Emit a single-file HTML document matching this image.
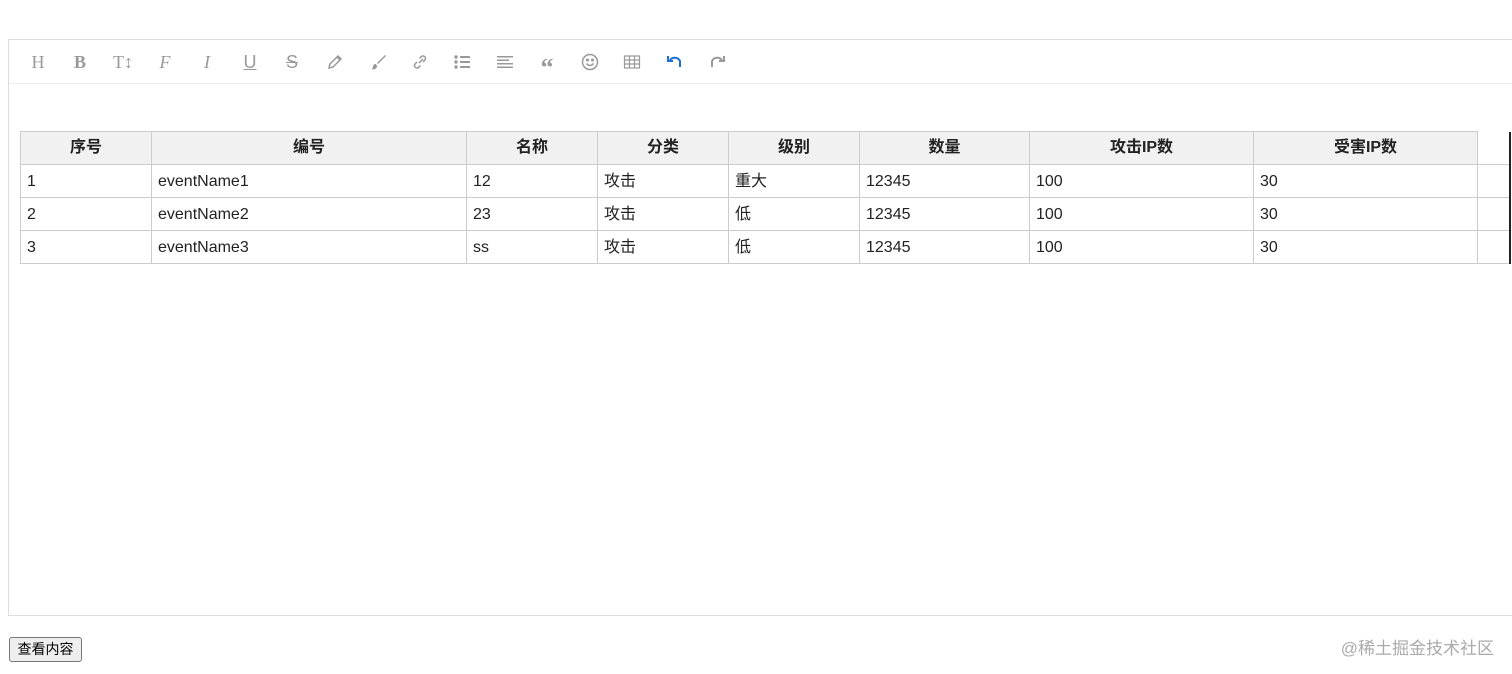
<!DOCTYPE html>
<html><head><meta charset="utf-8"><style>
body{margin:0;background:#fff;font-family:"Liberation Sans","Noto Sans CJK SC",sans-serif;width:1512px;height:674px;overflow:hidden;position:relative}
.ed{position:absolute;left:8px;top:39px;width:1510px;height:575px;border:1px solid #ddd;border-right:none}
.tb{height:43px;border-bottom:1px solid #eee;position:relative}
.ic{position:absolute;top:11px;width:22px;height:22px;text-align:center;line-height:22px;color:#999;font-size:18px}
.ic svg{display:block;margin:2px auto}
table{position:absolute;left:11px;top:91px;border-collapse:collapse;font-size:16px;color:#222}
td,th{border:1px solid #ccc;height:32px;padding:0 6px;text-align:left;line-height:32px;vertical-align:middle}
td span{display:inline-block;vertical-align:middle;line-height:20px;margin-top:2px}
th{background:#f1f1f1;text-align:center;font-weight:bold;line-height:30px}
th.x{background:#fff;border-top:none;border-bottom:none}
.x{border-right:2px solid #222}
.btn{position:absolute;left:9px;top:637px;width:71px;height:23px;border:1px solid #777;border-radius:3px;background:#eee;font-size:14px;text-align:center;line-height:23px;color:#000}
.wm{position:absolute;right:18px;top:634px;color:#aaa;font-size:17px}
</style></head><body>
<div class="ed"><div class="tb">
<span class="ic" style="left:18px;font-family:'Liberation Serif'">H</span>
<span class="ic" style="left:60px;font-weight:bold;font-family:'Liberation Serif'">B</span>
<span class="ic" style="left:103px;font-family:'Liberation Serif'">T↕</span>
<span class="ic" style="left:145px;font-family:'Liberation Serif';font-style:italic">F</span>
<span class="ic" style="left:187px;font-family:'Liberation Serif';font-style:italic">I</span>
<span class="ic" style="left:230px;text-decoration:underline">U</span>
<span class="ic" style="left:272px;text-decoration:line-through">S</span>
<span class="ic" style="left:315px"><svg width="18" height="18" viewBox="0 0 18 18" fill="none" stroke="#999" stroke-width="1.5"><path d="M3 15l1-4 8-8 3 3-8 8z M11 4l3 3"/></svg></span>
<span class="ic" style="left:358px"><svg width="18" height="18" viewBox="0 0 18 18"><path d="M16 2L8 10l1 1 8-8z" fill="#999"/><path d="M7 11c-2 0-3 1-3 3 0 1-1 2-2 2 3 1 6 0 6-3z" fill="#999"/></svg></span>
<span class="ic" style="left:400px"><svg width="18" height="18" viewBox="0 0 18 18" fill="none" stroke="#999" stroke-width="1.5"><path d="M8 10l4-4 M6 9l-2 2a2.5 2.5 0 0 0 3.5 3.5l2-2 M12 9l2-2a2.5 2.5 0 0 0-3.5-3.5l-2 2"/></svg></span>
<span class="ic" style="left:442px"><svg width="18" height="18" viewBox="0 0 18 18" fill="#999"><circle cx="3" cy="4" r="1.7"/><circle cx="3" cy="9" r="1.7"/><circle cx="3" cy="14" r="1.7"/><rect x="7" y="3" width="10" height="2"/><rect x="7" y="8" width="10" height="2"/><rect x="7" y="13" width="10" height="2"/></svg></span>
<span class="ic" style="left:485px"><svg width="18" height="18" viewBox="0 0 18 18" fill="#999"><rect x="1" y="3" width="16" height="1.5"/><rect x="1" y="6.5" width="12" height="1.5"/><rect x="1" y="10" width="16" height="1.5"/><rect x="1" y="13.5" width="16" height="1.5"/></svg></span>
<span class="ic" style="left:527px;font-weight:bold;font-size:26px;line-height:34px;font-family:'Liberation Serif'">“</span>
<span class="ic" style="left:570px"><svg width="18" height="18" viewBox="0 0 18 18" fill="none" stroke="#999" stroke-width="1.5"><circle cx="9" cy="9" r="7.5"/><path d="M5.5 10.5q3.5 4 7 0"/><circle cx="6.5" cy="7" r=".8" fill="#999"/><circle cx="11.5" cy="7" r=".8" fill="#999"/></svg></span>
<span class="ic" style="left:612px"><svg width="18" height="18" viewBox="0 0 18 18" fill="none" stroke="#999" stroke-width="1.2"><rect x="1.5" y="3" width="15" height="12"/><path d="M1.5 7h15M1.5 11h15M6.5 3v12M11.5 3v12"/></svg></span>
<span class="ic" style="left:655px"><svg width="18" height="18" viewBox="0 0 18 18" fill="none" stroke="#1e6fd9" stroke-width="2"><path d="M4 7a6 6 0 0 1 10 1l0 6"/><path d="M2 3v5h5" fill="none"/></svg></span>
<span class="ic" style="left:697px"><svg width="18" height="18" viewBox="0 0 18 18" fill="none" stroke="#999" stroke-width="2"><path d="M14 7a6 6 0 0 0-10 1l0 6"/><path d="M16 3v5h-5"/></svg></span>
</div>
<table>
<tr><th style="width:118px">序号</th><th style="width:302px">编号</th><th style="width:118px">名称</th><th style="width:118px">分类</th><th style="width:118px">级别</th><th style="width:157px">数量</th><th style="width:211px">攻击IP数</th><th style="width:211px">受害IP数</th><th class="x" style="width:19px"></th></tr>
<tr><td><span>1</span></td><td><span>eventName1</span></td><td><span>12</span></td><td><span>攻击</span></td><td><span>重大</span></td><td><span>12345</span></td><td><span>100</span></td><td><span>30</span></td><td class="x"></td></tr>
<tr><td><span>2</span></td><td><span>eventName2</span></td><td><span>23</span></td><td><span>攻击</span></td><td><span>低</span></td><td><span>12345</span></td><td><span>100</span></td><td><span>30</span></td><td class="x"></td></tr>
<tr><td><span>3</span></td><td><span>eventName3</span></td><td><span>ss</span></td><td><span>攻击</span></td><td><span>低</span></td><td><span>12345</span></td><td><span>100</span></td><td><span>30</span></td><td class="x"></td></tr>
</table></div>
<div class="btn">查看内容</div>
<div class="wm">@稀土掘金技术社区</div>
</body></html>
